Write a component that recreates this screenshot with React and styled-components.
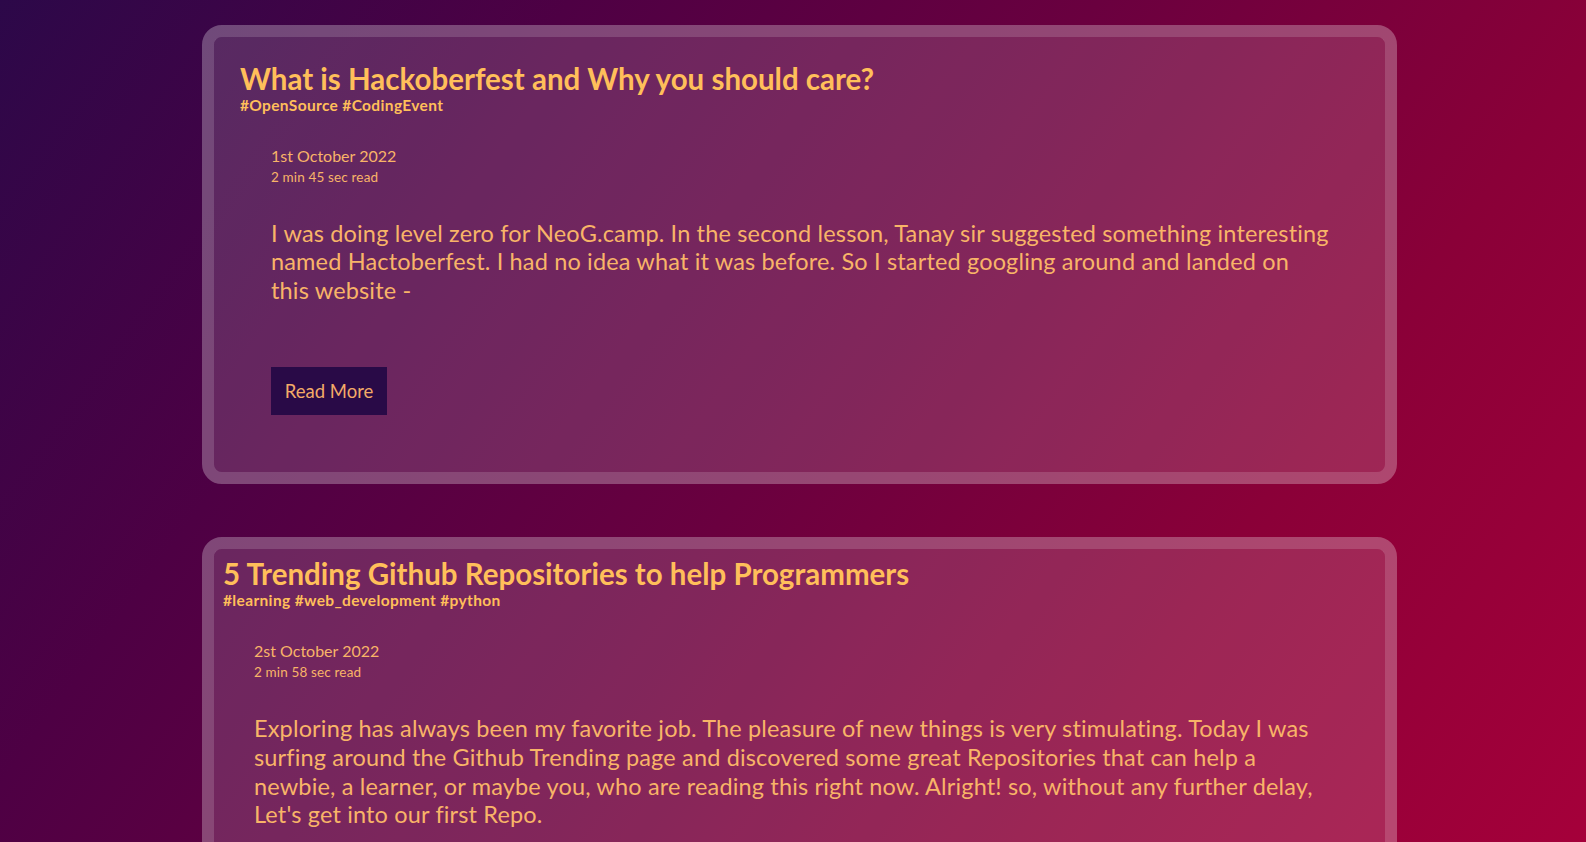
import React from "react";
import styled, { createGlobalStyle } from "styled-components";

const GlobalStyle = createGlobalStyle`
  html, body {
    margin: 0;
    padding: 0;
  }
  body {
    min-height: 100vh;
    font-family: "Lato", "Open Sans", sans-serif;
    background: linear-gradient(126deg, #2c0849 0%, #4e0044 26%, #6a003f 50%, #8a0038 74%, #a5003a 100%);
    background-attachment: fixed;
    color: #f8b468;
  }
`;

const Page = styled.main`
  display: flex;
  flex-direction: column;
  gap: 53px;
  padding: 25px 0 25px 202px;
`;

const Card = styled.article`
  position: relative;
  width: 1195px;
  box-sizing: border-box;
  border: 12px solid transparent;
  border-radius: 20px;
  background: rgba(255, 255, 255, 0.15);
  background-clip: padding-box;
  padding: ${(p) => p.$inset.top}px 20px 57px ${(p) => p.$inset.left}px;

  &::before {
    content: "";
    position: absolute;
    inset: -12px;
    box-sizing: border-box;
    border: 12px solid rgba(255, 255, 255, 0.28);
    border-radius: 20px;
    pointer-events: none;
  }
`;

const Title = styled.h2`
  margin: 0;
  font-size: 29.5px;
  line-height: 34px;
  font-weight: 700;
  color: #ffbf5a;
`;

const Tags = styled.div`
  font-size: 15.5px;
  line-height: 18px;
  letter-spacing: 0.35px;
  font-weight: 700;
  color: #ffbf5a;
`;

const Body = styled.div`
  padding-left: 31px;
  margin-top: 32px;
  display: flex;
  flex-direction: column;
  align-items: flex-start;
`;

const Date = styled.div`
  font-size: 16px;
  line-height: 20px;
`;

const ReadTime = styled.div`
  font-size: 13.5px;
  line-height: 16px;
  letter-spacing: 0.15px;
  margin-top: 3px;
`;

const Excerpt = styled.p`
  margin: 33.6px 0 0;
  width: ${(p) => p.$width}px;
  font-size: 23.5px;
  line-height: 28.75px;
  letter-spacing: 0.16px;
  font-weight: 400;
`;

const ReadMore = styled.button`
  margin-top: 62.6px;
  width: 116px;
  height: 48px;
  border: none;
  background: #290a47;
  color: #f3ab67;
  font-family: inherit;
  font-size: 18.5px;
  cursor: pointer;
  padding: 0;
`;

const posts = [
  {
    title: "What is Hackoberfest and Why you should care?",
    tags: "#OpenSource #CodingEvent",
    date: "1st October 2022",
    read: "2 min 45 sec read",
    excerpt:
      "I was doing level zero for NeoG.camp. In the second lesson, Tanay sir suggested something interesting named Hactoberfest. I had no idea what it was before. So I started googling around and landed on this website -",
    inset: { top: 25, left: 26 },
    width: 1059,
  },
  {
    title: "5 Trending Github Repositories to help Programmers",
    tags: "#learning #web_development #python",
    date: "2st October 2022",
    read: "2 min 58 sec read",
    excerpt:
      "Exploring has always been my favorite job. The pleasure of new things is very stimulating. Today I was surfing around the Github Trending page and discovered some great Repositories that can help a newbie, a learner, or maybe you, who are reading this right now. Alright! so, without any further delay, Let's get into our first Repo.",
    inset: { top: 8, left: 9 },
    width: 1062,
  },
];

export default function App() {
  return (
    <>
      <GlobalStyle />
      <Page>
        {posts.map((p) => (
          <Card key={p.title} $inset={p.inset}>
            <Title>{p.title}</Title>
            <Tags>{p.tags}</Tags>
            <Body>
              <Date>{p.date}</Date>
              <ReadTime>{p.read}</ReadTime>
              <Excerpt $width={p.width}>{p.excerpt}</Excerpt>
              <ReadMore>Read More</ReadMore>
            </Body>
          </Card>
        ))}
      </Page>
    </>
  );
}
